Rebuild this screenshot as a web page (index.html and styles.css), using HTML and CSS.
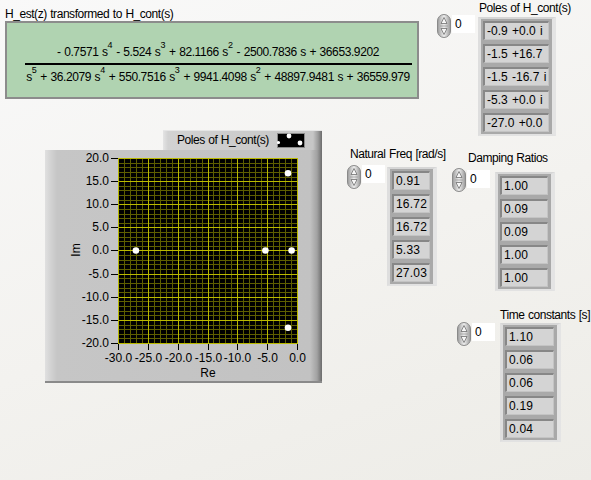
FILE: index.html
```html
<!DOCTYPE html>
<html>
<head>
<meta charset="utf-8">
<link rel="stylesheet" href="styles.css">
</head>
<body>
<div class="page">
  <div class="top">
    <div class="formula">
      <div class="lbl">H_est(z) transformed to H_cont(s)</div>
      <div class="fbox">
        <div class="frac">
          <div class="num">- 0.7571 s<sup>4</sup> - 5.524 s<sup>3</sup> + 82.1166 s<sup>2</sup> - 2500.7836 s + 36653.9202</div>
          <div class="bar"></div>
          <div class="den">s<sup>5</sup> + 36.2079 s<sup>4</sup> + 550.7516 s<sup>3</sup> + 9941.4098 s<sup>2</sup> + 48897.9481 s + 36559.979</div>
        </div>
      </div>
    </div>

    <div class="arr arr-poles">
      <div class="lbl">Poles of H_cont(s)</div>
      <div class="arr-body">
        <div class="index">
          <svg class="spin" viewBox="0 0 14 24"><defs><linearGradient id="sg1" x1="0" x2="1"><stop offset="0" stop-color="#9a9a9a"/><stop offset=".5" stop-color="#eeeeee"/><stop offset="1" stop-color="#989898"/></linearGradient></defs><rect x=".5" y=".5" width="13" height="23" rx="6.5" fill="url(#sg1)" stroke="#8a8a8a"/><path d="M7 3.5L10 9.5H4Z" class="sp-arrow"/><path d="M4 14.5H10L7 20.5Z" class="sp-arrow"/><path d="M3 12H11" class="sp-line"/></svg>
          <div class="idx-num">0</div>
        </div>
        <div class="frame">
          <div class="el">-0.9 +0.0 i</div>
          <div class="el">-1.5 +16.7</div>
          <div class="el">-1.5 -16.7 i</div>
          <div class="el">-5.3 +0.0 i</div>
          <div class="el">-27.0 +0.0</div>
        </div>
      </div>
    </div>
  </div>

  <div class="bottom">
    <div class="graph">
      <div class="legend">
        <span class="leg-text">Poles of H_cont(s)</span>
        <svg class="swatch" viewBox="0 0 28 15"><rect x=".5" y=".5" width="27" height="14" class="sw-bg"/><circle cx="12" cy="3" r="2.4" class="dot"/><circle cx="23" cy="10" r="2.4" class="dot"/><circle cx="1.5" cy="9.5" r="1.6" class="dot"/></svg>
      </div>
      <div class="gpanel">
        <svg class="plot" viewBox="0 0 277 233" width="277" height="233">
          <rect x="73" y="8" width="180" height="186" class="plot-bg"/>
          <path class="g-minor" d="M79.5 8V194M85.5 8V194M91.5 8V194M97.5 8V194M109.5 8V194M115.5 8V194M121.5 8V194M127.5 8V194M139.5 8V194M145.5 8V194M151.5 8V194M157.5 8V194M168.5 8V194M174.5 8V194M180.5 8V194M186.5 8V194M198.5 8V194M204.5 8V194M210.5 8V194M216.5 8V194M228.5 8V194M234.5 8V194M240.5 8V194M246.5 8V194M73 13.5H253M73 17.5H253M73 22.5H253M73 27.5H253M73 36.5H253M73 40.5H253M73 45.5H253M73 50.5H253M73 59.5H253M73 64.5H253M73 68.5H253M73 73.5H253M73 82.5H253M73 87.5H253M73 91.5H253M73 96.5H253M73 105.5H253M73 110.5H253M73 114.5H253M73 119.5H253M73 128.5H253M73 133.5H253M73 138.5H253M73 142.5H253M73 151.5H253M73 156.5H253M73 161.5H253M73 165.5H253M73 175.5H253M73 179.5H253M73 184.5H253M73 188.5H253"/>
          <path class="g-major" d="M73.5 8V194M103.5 8V194M133.5 8V194M163.5 8V194M192.5 8V194M222.5 8V194M252.5 8V194M73 8.5H253M73 31.5H253M73 54.5H253M73 77.5H253M73 100.5H253M73 124.5H253M73 147.5H253M73 170.5H253M73 193.5H253"/>
          <path class="tick" d="M66 8.5H73M66 31.5H73M66 54.5H73M66 77.5H73M66 100.5H73M66 124.5H73M66 147.5H73M66 170.5H73M66 193.5H73M73.5 194V200M103.5 194V200M133.5 194V200M163.5 194V200M192.5 194V200M222.5 194V200M252.5 194V200"/>
          <g class="ylab">
            <text x="64" y="12">20.0</text>
            <text x="64" y="35">15.0</text>
            <text x="64" y="58">10.0</text>
            <text x="64" y="81">5.0</text>
            <text x="64" y="104">0.0</text>
            <text x="64" y="128">-5.0</text>
            <text x="64" y="151">-10.0</text>
            <text x="64" y="174">-15.0</text>
            <text x="64" y="197">-20.0</text>
          </g>
          <g class="xlab">
            <text x="73.5" y="212">-30.0</text>
            <text x="103.5" y="212">-25.0</text>
            <text x="133.5" y="212">-20.0</text>
            <text x="163.5" y="212">-15.0</text>
            <text x="192.5" y="212">-10.0</text>
            <text x="222.5" y="212">-5.0</text>
            <text x="252.5" y="212">0.0</text>
            <text x="163" y="227">Re</text>
            <text x="31" y="104" transform="rotate(-90 31 100)">Im</text>
          </g>
          <circle cx="246.6" cy="100.5" r="3.3" class="dot"/>
          <circle cx="243" cy="23.3" r="3.3" class="dot"/>
          <circle cx="243" cy="177.7" r="3.3" class="dot"/>
          <circle cx="220.4" cy="100.5" r="3.3" class="dot"/>
          <circle cx="90.9" cy="100.5" r="3.3" class="dot"/>
        </svg>
      </div>
    </div>

    <div class="right">
      <div class="right-row">
        <div class="arr arr-nat">
          <div class="lbl">Natural Freq [rad/s]</div>
          <div class="arr-body">
            <div class="index">
              <svg class="spin" viewBox="0 0 14 24"><defs><linearGradient id="sg2" x1="0" x2="1"><stop offset="0" stop-color="#9a9a9a"/><stop offset=".5" stop-color="#eeeeee"/><stop offset="1" stop-color="#989898"/></linearGradient></defs><rect x=".5" y=".5" width="13" height="23" rx="6.5" fill="url(#sg2)" stroke="#8a8a8a"/><path d="M7 3.5L10 9.5H4Z" class="sp-arrow"/><path d="M4 14.5H10L7 20.5Z" class="sp-arrow"/><path d="M3 12H11" class="sp-line"/></svg>
              <div class="idx-num">0</div>
            </div>
            <div class="frame">
              <div class="el">0.91</div>
              <div class="el">16.72</div>
              <div class="el">16.72</div>
              <div class="el">5.33</div>
              <div class="el">27.03</div>
            </div>
          </div>
        </div>

        <div class="arr arr-damp">
          <div class="lbl">Damping Ratios</div>
          <div class="arr-body">
            <div class="index">
              <svg class="spin" viewBox="0 0 14 24"><defs><linearGradient id="sg3" x1="0" x2="1"><stop offset="0" stop-color="#9a9a9a"/><stop offset=".5" stop-color="#eeeeee"/><stop offset="1" stop-color="#989898"/></linearGradient></defs><rect x=".5" y=".5" width="13" height="23" rx="6.5" fill="url(#sg3)" stroke="#8a8a8a"/><path d="M7 3.5L10 9.5H4Z" class="sp-arrow"/><path d="M4 14.5H10L7 20.5Z" class="sp-arrow"/><path d="M3 12H11" class="sp-line"/></svg>
              <div class="idx-num">0</div>
            </div>
            <div class="frame">
              <div class="el">1.00</div>
              <div class="el">0.09</div>
              <div class="el">0.09</div>
              <div class="el">1.00</div>
              <div class="el">1.00</div>
            </div>
          </div>
        </div>
      </div>

      <div class="arr arr-time">
        <div class="lbl">Time constants [s]</div>
        <div class="arr-body">
          <div class="index">
            <svg class="spin" viewBox="0 0 14 24"><defs><linearGradient id="sg4" x1="0" x2="1"><stop offset="0" stop-color="#9a9a9a"/><stop offset=".5" stop-color="#eeeeee"/><stop offset="1" stop-color="#989898"/></linearGradient></defs><rect x=".5" y=".5" width="13" height="23" rx="6.5" fill="url(#sg4)" stroke="#8a8a8a"/><path d="M7 3.5L10 9.5H4Z" class="sp-arrow"/><path d="M4 14.5H10L7 20.5Z" class="sp-arrow"/><path d="M3 12H11" class="sp-line"/></svg>
            <div class="idx-num">0</div>
          </div>
          <div class="frame">
            <div class="el">1.10</div>
            <div class="el">0.06</div>
            <div class="el">0.06</div>
            <div class="el">0.19</div>
            <div class="el">0.04</div>
          </div>
        </div>
      </div>
    </div>
  </div>
</div>
</body>
</html>
```

FILE: styles.css
```css
* { box-sizing: border-box; }

html, body {
  margin: 0;
  padding: 0;
}

html {
  background: #f3f2ee;
}

body {
  width: 591px;
  height: 480px;
  overflow: hidden;
  background: linear-gradient(160deg, #f9f9f9 0%, #f3f2ef 55%, #edece7 100%);
  font-family: "Liberation Sans", Arial, sans-serif;
  font-size: 12px;
  color: #000;
}

.lbl {
  font-size: 12px;
  line-height: 13px;
  letter-spacing: -0.45px;
  word-spacing: 0.6px;
  white-space: nowrap;
}

/* ---------- top row ---------- */
.top {
  display: flex;
  align-items: flex-start;
  height: 130px;
}

.formula {
  margin-left: 5px;
  margin-top: 8px;
}

.fbox {
  width: 414px;
  height: 78px;
  background: #b0d3b1;
  border: 2px solid #8c8c8c;
  padding: 22px 0 0 12px;
  display: flex;
  justify-content: center;
  align-items: flex-start;
}

.frac {
  display: flex;
  flex-direction: column;
  align-items: center;
  font-size: 12px;
  letter-spacing: -0.4px;
  word-spacing: 0.6px;
}

.num, .den {
  line-height: 13px;
  white-space: nowrap;
}

.frac sup {
  font-size: 9px;
  line-height: 0;
  vertical-align: 8px;
  letter-spacing: 0;
}

.bar {
  align-self: stretch;
  height: 2px;
  background: #000;
  margin: 4px -2px 5px -1px;
}

/* ---------- arrays ---------- */
.arr {
  display: flex;
  flex-direction: column;
}

.arr-body {
  display: flex;
  align-items: flex-start;
}

.index {
  display: flex;
  align-items: flex-start;
  flex: none;
}

.spin {
  width: 14px;
  height: 24px;
  flex: none;
  display: block;
}

.sp-arrow {
  fill: #f7f7f7;
  stroke: #707070;
  stroke-width: 0.8;
  stroke-linejoin: round;
}

.sp-line {
  stroke: #9c9c9c;
  stroke-width: 0.8;
}

.idx-num {
  width: 23px;
  height: 18px;
  margin-left: 1px;
  background: #ffffff;
  padding-left: 3px;
  line-height: 18px;
  font-size: 12px;
}

.frame {
  flex: none;
  display: flex;
  flex-direction: column;
  gap: 4px;
  background: #a9a9a9;
  border-style: solid;
  border-width: 2px 4px 2px 3px;
  border-color: #d6d6d6 #e4e4e4 #e2e2e2 #dedede;
  padding: 2px 3px 2px 2px;
}

.el {
  height: 19px;
  background: #d4d4d4;
  border-style: solid;
  border-width: 2px 1px 1px 2px;
  border-color: #878787 #c4c4c4 #c4c4c4 #878787;
  padding-left: 2px;
  font-size: 12px;
  line-height: 16px;
  letter-spacing: 0.2px;
  white-space: pre;
  overflow: hidden;
}

/* poles */
.arr-poles {
  margin-left: 18px;
  margin-top: 2px;
}
.arr-poles .lbl { margin-left: 42px; margin-bottom: 2px; }
.arr-poles .index { margin-top: -3px; }
.arr-poles .idx-num { margin-top: 1px; }
.arr-poles .frame { margin-left: 3px; }
.arr-poles .el {
  width: 66px;
  letter-spacing: 0;
  word-spacing: 1px;
}

/* ---------- bottom ---------- */
.bottom {
  display: flex;
  align-items: flex-start;
}

.graph {
  margin-left: 45px;
  display: flex;
  flex-direction: column;
  flex: none;
}

.legend {
  margin-left: 118px;
  width: 159px;
  height: 20px;
  display: flex;
  align-items: center;
  padding-left: 14px;
  background: linear-gradient(90deg, #e4e4e4 0, #d2d2d2 5px, #cccccc 50%, #c6c6c6 calc(100% - 9px), #9c9c9c calc(100% - 4px), #6c6c6c 100%);
  border-top: 1px solid #e6e6e6;
}

.leg-text {
  font-size: 12px;
  line-height: 13px;
  letter-spacing: -0.45px;
  word-spacing: 0.6px;
  white-space: nowrap;
}

.swatch {
  margin-left: auto;
  margin-right: 17px;
  width: 28px;
  height: 15px;
  display: block;
}

.sw-bg {
  fill: #000;
  stroke: #8a8a8a;
  stroke-width: 1;
}

.gpanel {
  width: 277px;
  height: 233px;
  background: linear-gradient(90deg, #e0e0e0 0, #d2d2d2 6px, #c6c6c6 12px, #c2c2c2 calc(100% - 12px), #a2a2a2 calc(100% - 5px), #6c6c6c 100%);
  box-shadow: inset 0 -2px 0 #8a8a8a;
}

.plot {
  display: block;
  shape-rendering: crispEdges;
}

.plot-bg { fill: #000; }

.g-minor {
  fill: none;
  stroke: #5e5e00;
  stroke-width: 1;
}

.g-major {
  fill: none;
  stroke: #b9b900;
  stroke-width: 1;
}

.tick {
  fill: none;
  stroke: #000;
  stroke-width: 1;
}

.ylab text, .xlab text {
  font-family: "Liberation Sans", Arial, sans-serif;
  font-size: 12px;
  fill: #000;
}

.ylab text { text-anchor: end; }
.xlab text { text-anchor: middle; }

.dot {
  fill: #ffffff;
  shape-rendering: geometricPrecision;
}

/* right column */
.right {
  margin-left: 25px;
  display: flex;
  flex-direction: column;
}

.right-row {
  display: flex;
  align-items: flex-start;
}

.arr-nat {
  width: 100px;
  margin-top: 18px;
}
.arr-nat .lbl { margin-left: 3px; margin-bottom: 6px; }
.arr-nat .index { margin-top: -2px; }
.arr-nat .frame { margin-left: 2px; }
.arr-nat .el { width: 38px; }

.arr-damp {
  margin-left: 5px;
  margin-top: 22px;
}
.arr-damp .lbl { margin-left: 16px; margin-bottom: 7px; }
.arr-damp .index { margin-top: -4px; }
.arr-damp .idx-num { margin-top: 2px; }
.arr-damp .frame { margin-left: 5px; }
.arr-damp .el { width: 48px; }

.arr-time {
  margin-left: 110px;
  margin-top: 18px;
}
.arr-time .lbl { margin-left: 43px; margin-bottom: 1px; }
.arr-time .index { margin-top: -1px; }
.arr-time .idx-num { margin-top: 1px; }
.arr-time .frame { margin-left: 5px; }
.arr-time .el { width: 49px; }
```
